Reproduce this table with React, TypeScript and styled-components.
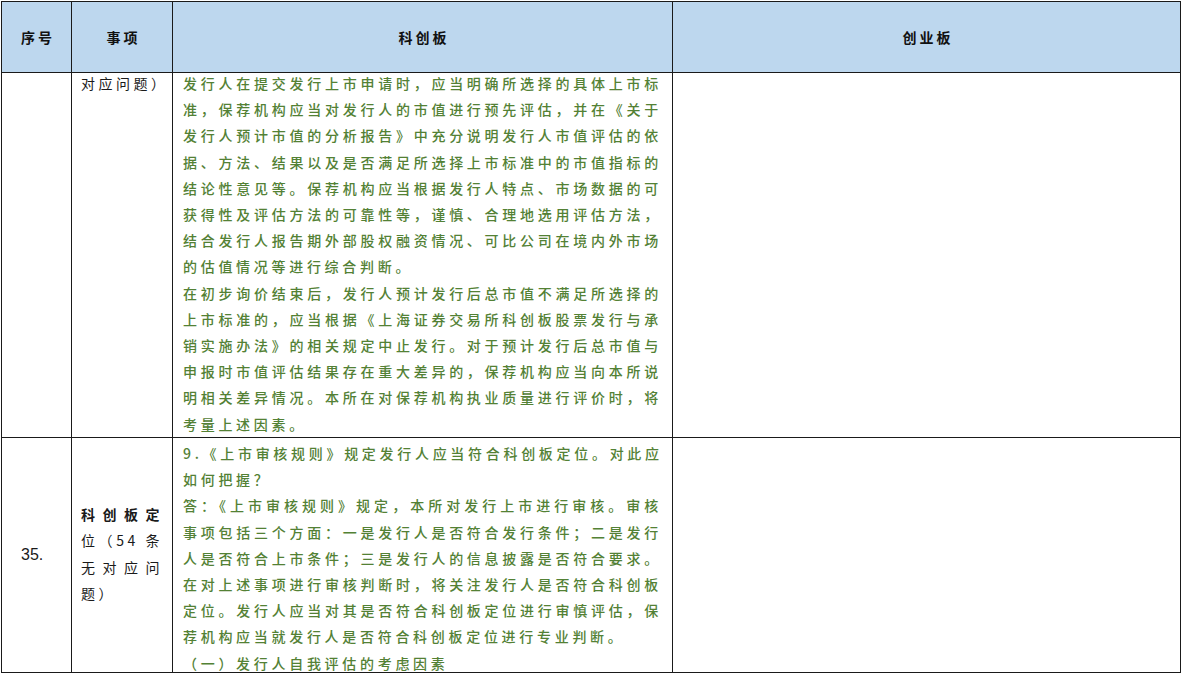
import styled, { createGlobalStyle } from "styled-components"

const GlobalStyle = createGlobalStyle`
 html, body {
  margin: 0;
  padding: 0;
  background: #ffffff;
 }
 body {
  font-family: "Noto Sans CJK SC", "Noto Sans", sans-serif;
 }
`

type Line = { text: string; end?: boolean }

const kcbRow1: Line[] = [
 { text: "发行人在提交发行上市申请时，应当明确所选择的具体上市标" },
 { text: "准，保荐机构应当对发行人的市值进行预先评估，并在《关于" },
 { text: "发行人预计市值的分析报告》中充分说明发行人市值评估的依" },
 { text: "据、方法、结果以及是否满足所选择上市标准中的市值指标的" },
 { text: "结论性意见等。保荐机构应当根据发行人特点、市场数据的可" },
 { text: "获得性及评估方法的可靠性等，谨慎、合理地选用评估方法，" },
 { text: "结合发行人报告期外部股权融资情况、可比公司在境内外市场" },
 { text: "的估值情况等进行综合判断。", end: true },
 { text: "在初步询价结束后，发行人预计发行后总市值不满足所选择的" },
 { text: "上市标准的，应当根据《上海证券交易所科创板股票发行与承" },
 { text: "销实施办法》的相关规定中止发行。对于预计发行后总市值与" },
 { text: "申报时市值评估结果存在重大差异的，保荐机构应当向本所说" },
 { text: "明相关差异情况。本所在对保荐机构执业质量进行评价时，将" },
 { text: "考量上述因素。", end: true }
]

const kcbRow2: Line[] = [
 { text: "9.《上市审核规则》规定发行人应当符合科创板定位。对此应" },
 { text: "如何把握？", end: true },
 { text: "答：《上市审核规则》规定，本所对发行上市进行审核。审核" },
 { text: "事项包括三个方面：一是发行人是否符合发行条件；二是发行" },
 { text: "人是否符合上市条件；三是发行人的信息披露是否符合要求。" },
 { text: "在对上述事项进行审核判断时，将关注发行人是否符合科创板" },
 { text: "定位。发行人应当对其是否符合科创板定位进行审慎评估，保" },
 { text: "荐机构应当就发行人是否符合科创板定位进行专业判断。", end: true },
 { text: "（一）发行人自我评估的考虑因素", end: true }
]

const TextLines = ({ lines }: { lines: Line[] }) => (
 <>
  {lines.map((l, i) => (
   <Row key={i} $end={l.end}>{l.text}</Row>
  ))}
 </>
)

export default function App() {
 return (
  <>
   <GlobalStyle />
   <Table>
    <Head>序号</Head>
    <Head>事项</Head>
    <Head>科创板</Head>
    <Head>创业板</Head>

    <Cell />
    <Cell>
     <Item>对应问题）</Item>
    </Cell>
    <Cell>
     <Body $offset={-3}>
      <TextLines lines={kcbRow1} />
     </Body>
    </Cell>
    <Cell />

    <Cell $center>
     <Num>35.</Num>
    </Cell>
    <Cell $center>
     <Item>
      <Row $strong>科创板定</Row>
      <Row>位（54 条</Row>
      <Row>无对应问</Row>
      <Row $end>题）</Row>
     </Item>
    </Cell>
    <Cell>
     <Body $offset={2}>
      <TextLines lines={kcbRow2} />
     </Body>
    </Cell>
    <Cell />
   </Table>
  </>
 )
}

const Table = styled.div`
 display: grid;
 grid-template-columns: 70px 101px 500px 508px;
 grid-template-rows: 71px 365px 235px;
 margin: 1px 0 0 1px;
 border-left: 1px solid #1a1a1a;
 border-top: 1px solid #1a1a1a;
 width: max-content;
`

const Head = styled.div`
 box-sizing: border-box;
 display: flex;
 align-items: center;
 justify-content: center;
 background: #bdd7ee;
 border-right: 1px solid #1a1a1a;
 border-bottom: 1px solid #1a1a1a;
 font-size: 14px;
 font-weight: 700;
 letter-spacing: 3px;
 color: #111111;
 padding-left: 3px;
`

const Cell = styled.div<{ $center?: boolean }>`
 box-sizing: border-box;
 display: flex;
 flex-direction: column;
 justify-content: ${(p) => (p.$center ? "center" : "flex-start")};
 border-right: 1px solid #1a1a1a;
 border-bottom: 1px solid #1a1a1a;
 overflow: hidden;
`

const Body = styled.div<{ $offset: number }>`
 margin-top: ${(p) => p.$offset}px;
 padding: 0 10px;
 color: #538135;
 font-size: 14px;
 font-weight: 500;
 line-height: 26.2px;
 letter-spacing: 3.7px;
`

const Row = styled.div<{ $end?: boolean; $strong?: boolean }>`
 text-align: justify;
 text-align-last: ${(p) => (p.$end ? "left" : "justify")};
 white-space: nowrap;
 font-weight: ${(p) => (p.$strong ? 700 : "inherit")};
`

const Item = styled.div`
 padding: 0 9px;
 margin-top: -3px;
 color: #1a1a1a;
 font-size: 14px;
 line-height: 26.2px;
 letter-spacing: 3.5px;
`

const Num = styled.div`
 padding-left: 19px;
 font-family: "Liberation Sans", Arial, sans-serif;
 font-size: 16px;
 color: #1a1a1a;
`
